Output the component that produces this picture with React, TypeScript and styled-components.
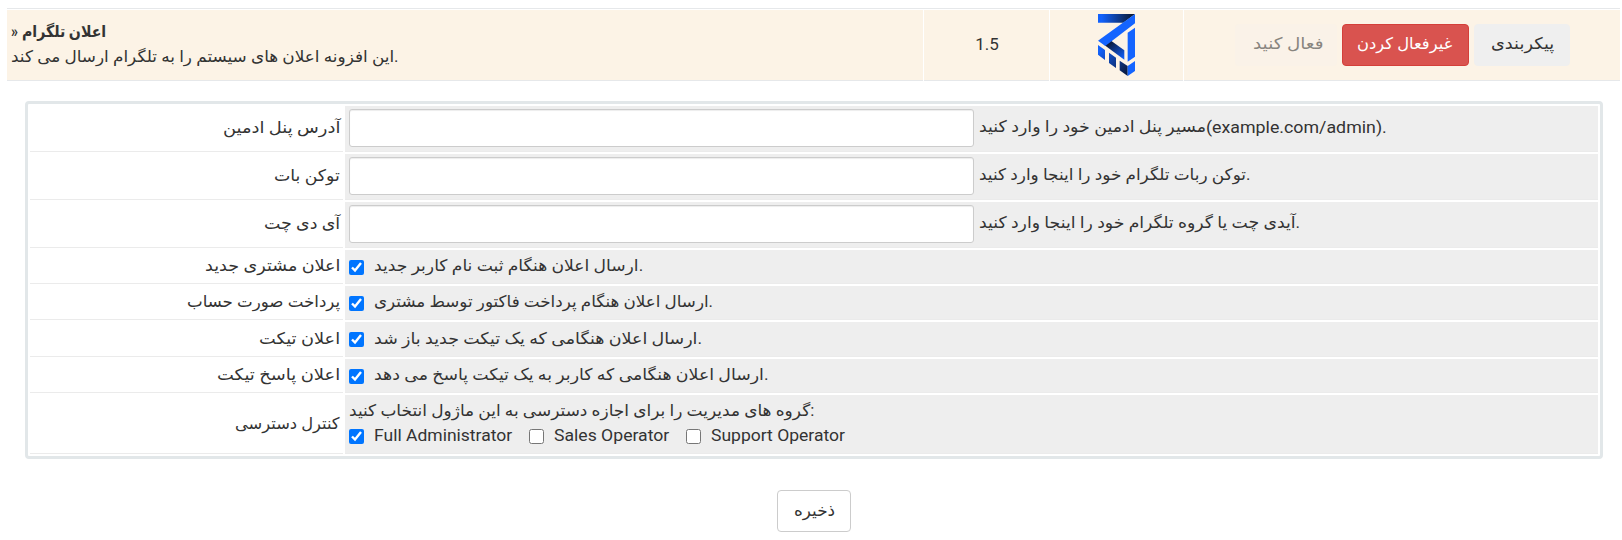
import React, { useLayoutEffect, useRef, useState } from "react";
import styled, { createGlobalStyle } from "styled-components";

const GlobalStyle = createGlobalStyle`
  * { box-sizing: border-box; }
  body {
    margin: 0;
    background: #fff;
    color: #333;
    font-family: Roboto, "DejaVu Sans", sans-serif;
    font-size: 17px;
    line-height: 24px;
  }
`;

const Page = styled.main`
  width: 1622px;
  height: 540px;
  padding: 8px 2px 0 7px;
  overflow: hidden;
`;

const ModuleRow = styled.section`
  display: grid;
  grid-template-columns: 916px 125px 133px 1fr;
  column-gap: 1px;
  height: 73px;
  padding-top: 1px;
  border-top: 1px solid #e6e8ea;
`;

const ModuleCell = styled.div<{ $center?: boolean }>`
  display: flex;
  align-items: center;
  justify-content: ${(p) => (p.$center ? "center" : "flex-start")};
  background: #fcf3e6;
  border-bottom: 1px solid #e6e8ea;
`;

const ModuleInfo = styled.div`
  display: flex;
  flex-direction: column;
  padding: 0 0 2px 4px;
`;

const ModuleTitle = styled.strong`
  display: flex;
  gap: 4px;
  height: 25px;
`;

const Version = styled.span`
  padding: 0 0 3px 1px;
`;

const ActionCell = styled(ModuleCell)`
  justify-content: flex-end;
  gap: 5px;
  padding-right: 50px;
  padding-bottom: 1px;
`;

type Tone = "default" | "danger" | "save";
const tones: Record<Tone, string> = {
  default: "background: #efefef; border-color: #efefef; color: #333; padding: 0 5px 2px 0;",
  danger: "background: #d9534f; border-color: #d43f3a; color: #fff; padding: 0 3px 2px 0;",
  save: "background: #fff; border-color: #ccc; color: #333; padding: 0;",
};

const Button = styled.button<{ $tone: Tone; $width: number }>`
  display: flex;
  align-items: center;
  justify-content: center;
  width: ${(p) => p.$width}px;
  height: 42px;
  border: 1px solid;
  border-radius: 4px;
  font: inherit;
  ${(p) => tones[p.$tone]}
  &:disabled { background: #faf2e8; border-color: #faf2e8; color: #88857f; }
`;

const Panel = styled.section`
  display: flex;
  flex-direction: column;
  gap: 2px;
  width: 1578px;
  margin: 20px 0 31px 18px;
  padding: 2px;
  border: 3px solid #e2e7e9;
  border-radius: 4px;
`;

const SettingRow = styled.div<{ $height: number }>`
  display: grid;
  grid-template-columns: 313px 1fr;
  column-gap: 2px;
  height: ${(p) => p.$height}px;
`;

const Label = styled.div`
  display: flex;
  align-items: center;
  justify-content: flex-end;
  padding: 0 3px 1px 0;
  border-bottom: 1px solid #ebebeb;
`;

const Value = styled.div<{ $input?: boolean }>`
  display: flex;
  align-items: ${(p) => (p.$input ? "flex-start" : "center")};
  gap: ${(p) => (p.$input ? 5 : 10)}px;
  padding: ${(p) => (p.$input ? "3px 4px 0" : "0 4px 1px")};
  background: #eee;
  border-bottom: 1px solid #ebebeb;
`;

const AccessValue = styled(Value)`
  flex-direction: column;
  align-items: flex-start;
  justify-content: flex-start;
  gap: 0;
  padding-top: 4px;
`;

const TextInput = styled.input`
  width: 625px;
  height: 38px;
  padding: 6px 12px;
  border: 1px solid #ccc;
  border-radius: 3px;
  background: #fff;
  box-shadow: inset 0 1px 1px rgba(0, 0, 0, 0.075);
  font: inherit;
`;

const Hint = styled.div`
  display: flex;
  padding-top: 6px;
`;

const Check = styled.input.attrs({ type: "checkbox" })`
  flex: none;
  width: 15px;
  height: 15px;
  margin: 2px 0 0;
`;

const Roles = styled.div`
  display: flex;
  gap: 17px;
`;

const Role = styled.label`
  display: flex;
  align-items: center;
  gap: 10px;

  ${Check} {
    margin-top: 3px;
  }
`;

const Footer = styled.footer`
  display: flex;
  justify-content: center;
`;

const Fitted = styled.span<{ $size: number }>`
  display: inline-block;
  flex: none;
  height: 24px;
  white-space: nowrap;
  font-size: ${(p) => p.$size}px;
`;

const FittedInner = styled.span`
  display: inline-block;
  transform-origin: 0 50%;
`;

/* Condenses a line of text so that it fills the given width. */
function Text({ width, size = 16, children }: { width: number; size?: number; children: string }) {
  const ref = useRef<HTMLSpanElement>(null);
  const [scale, setScale] = useState(1);
  useLayoutEffect(() => {
    if (ref.current) setScale(width / ref.current.offsetWidth);
  }, [width, size, children]);
  return (
    <Fitted $size={size} style={{ width }}>
      <FittedInner ref={ref} style={{ transform: `scaleX(${scale})` }}>
        {children}
      </FittedInner>
    </Fitted>
  );
}

function Logo() {
  return (
    <svg width="37" height="62" viewBox="594 42 111 186">
      <defs>
        <linearGradient id="bar">
          <stop offset="0.1" stopColor="#1261fb" />
          <stop offset="1" stopColor="#0b1424" />
        </linearGradient>
        <linearGradient id="fold" x1="0" y1="0" x2="0.8" y2="1">
          <stop offset="0.15" stopColor="#0b1630" />
          <stop offset="1" stopColor="#105cf0" />
        </linearGradient>
        <linearGradient id="steps" gradientUnits="userSpaceOnUse" x1="600" y1="150" x2="683" y2="210">
          <stop offset="0" stopColor="#1261fb" />
          <stop offset="1" stopColor="#0b1c42" />
        </linearGradient>
      </defs>
      <path fill="url(#bar)" d="M594 42H705L670 68H594Z" />
      <path fill="url(#fold)" d="M614 136L631 121L673 151V179Z" />
      <path fill="#1464ff" d="M705 42V70L616 138L594 122ZM683 98L705 83V170L683 185Z" />
      <path fill="url(#steps)" d="M594 135L615 150V180L594 164ZM627 158L648 173V204L627 189ZM659 182L683 198V228L659 211Z" />
      <path fill="#1464ff" d="M683 198L705 183V213L683 228Z" />
    </svg>
  );
}

const fields = [
  { label: "آدرس پنل ادمین", lw: 117, hint: "مسیر پنل ادمین خود را وارد کنید", hw: 227, path: "(example.com/admin)." },
  { label: "توکن بات", lw: 66, hint: "توکن ربات تلگرام خود را اینجا وارد کنید.", hw: 271 },
  { label: "آی دی چت", lw: 76, hint: "آیدی چت یا گروه تلگرام خود را اینجا وارد کنید.", hw: 321 },
];

const toggles = [
  { label: "اعلان مشتری جدید", lw: 135, hint: "ارسال اعلان هنگام ثبت نام کاربر جدید.", hw: 269, h: 34 },
  { label: "پرداخت صورت حساب", lw: 153, hint: "ارسال اعلان هنگام پرداخت فاکتور توسط مشتری.", hw: 339, h: 34 },
  { label: "اعلان تیکت", lw: 81, hint: "ارسال اعلان هنگامی که یک تیکت جدید باز شد.", hw: 328, h: 35 },
  { label: "اعلان پاسخ تیکت", lw: 123, hint: "ارسال اعلان هنگامی که کاربر به یک تیکت پاسخ می دهد.", hw: 394, h: 34 },
];

const roles = [
  { name: "Full Administrator", on: true, w: 138 },
  { name: "Sales Operator", on: false, w: 115 },
  { name: "Support Operator", on: false, w: 134 },
];

export default function App() {
  return (
    <Page>
      <GlobalStyle />
      <ModuleRow>
        <ModuleCell>
          <ModuleInfo>
            <ModuleTitle>
              <Text width={7}>»</Text>
              <Text width={84}>اعلان تلگرام</Text>
            </ModuleTitle>
            <Text width={388}>این افزونه اعلان های سیستم را به تلگرام ارسال می کند.</Text>
          </ModuleInfo>
        </ModuleCell>
        <ModuleCell $center>
          <Version>1.5</Version>
        </ModuleCell>
        <ModuleCell $center>
          <Logo />
        </ModuleCell>
        <ActionCell>
          <Button $tone="default" $width={102} disabled>
            <Text width={71}>فعال کنید</Text>
          </Button>
          <Button $tone="danger" $width={127}>
            <Text width={95}>غیرفعال کردن</Text>
          </Button>
          <Button $tone="default" $width={96}>
            <Text width={63}>پیکربندی</Text>
          </Button>
        </ActionCell>
      </ModuleRow>

      <Panel>
        {fields.map((f) => (
          <SettingRow key={f.label} $height={46}>
            <Label>
              <Text width={f.lw}>{f.label}</Text>
            </Label>
            <Value $input>
              <TextInput />
              <Hint>
                <Text width={f.hw}>{f.hint}</Text>
                {f.path && <Text width={181} size={17}>{f.path}</Text>}
              </Hint>
            </Value>
          </SettingRow>
        ))}
        {toggles.map((t) => (
          <SettingRow key={t.label} $height={t.h}>
            <Label>
              <Text width={t.lw}>{t.label}</Text>
            </Label>
            <Value>
              <Check defaultChecked />
              <Text width={t.hw}>{t.hint}</Text>
            </Value>
          </SettingRow>
        ))}
        <SettingRow $height={59}>
          <Label>
            <Text width={105}>کنترل دسترسی</Text>
          </Label>
          <AccessValue>
            <Text width={465}>گروه های مدیریت را برای اجازه دسترسی به این ماژول انتخاب کنید:</Text>
            <Roles>
              {roles.map((r) => (
                <Role key={r.name}>
                  <Check defaultChecked={r.on} />
                  <Text width={r.w} size={17}>{r.name}</Text>
                </Role>
              ))}
            </Roles>
          </AccessValue>
        </SettingRow>
      </Panel>

      <Footer>
        <Button $tone="save" $width={74}>
          <Text width={41}>ذخیره</Text>
        </Button>
      </Footer>
    </Page>
  );
}
